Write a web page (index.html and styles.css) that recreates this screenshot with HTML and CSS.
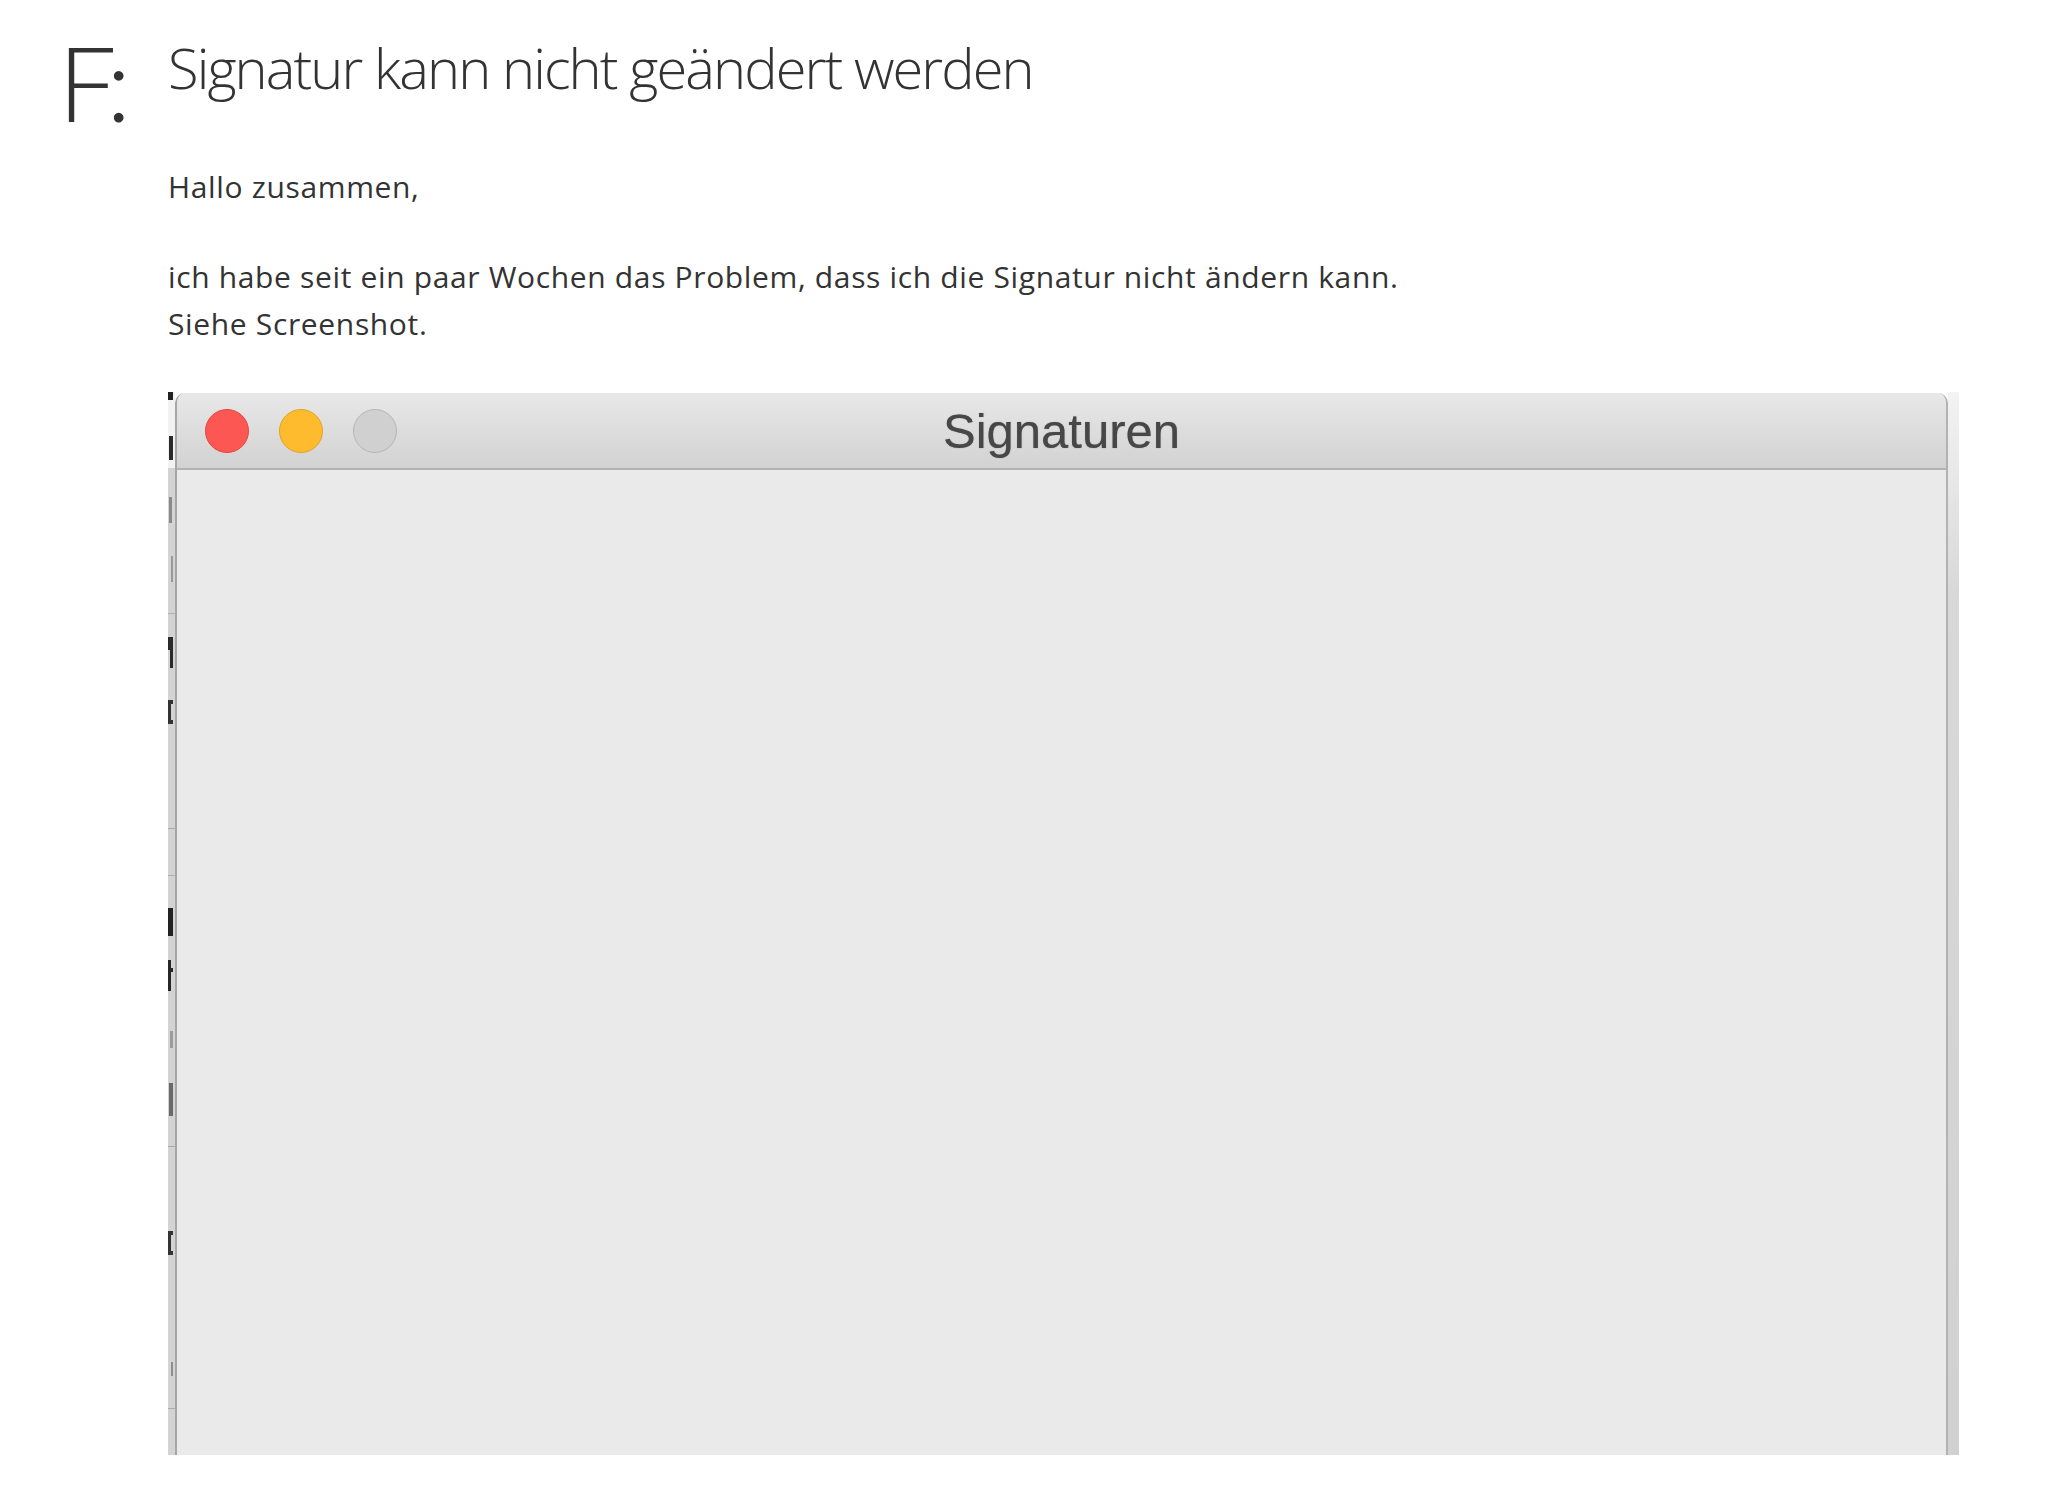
FILE: index.html
```html
<!DOCTYPE html>
<html lang="de">
<head>
    <meta charset="UTF-8">
    <meta name="viewport" content="width=device-width, initial-scale=1.0">
    <title>Signatur kann nicht geändert werden</title>
    <link rel="stylesheet" href="styles.css">
</head>
<body>
    <div class="question">
        <div class="label">F:</div>
        <div class="content">
            <h1 class="title">Signatur kann nicht geändert werden</h1>
            <p class="greeting">Hallo zusammen,</p>
            <p class="text">ich habe seit ein paar Wochen das Problem, dass ich die Signatur nicht ändern kann.<br>Siehe Screenshot.</p>

            <!-- Screenshot -->
            <div class="shot">
                <svg class="cutoff" width="7" height="1063" viewBox="0 0 7 1063">
                    <rect x="0" y="0" width="7" height="76" fill="#f2f2f2"/>
                    <rect x="0" y="76" width="7" height="987" fill="#d3d3d3"/>
                    <rect x="0" y="0" width="5" height="8" fill="#222"/>
                    <rect x="1" y="44" width="4" height="24" fill="#2a2a2a"/>
                    <rect x="1" y="105" width="3" height="26" fill="#8a8a8a"/>
                    <rect x="3" y="164" width="2" height="26" fill="#9a9a9a"/>
                    <rect x="0" y="221" width="7" height="1" fill="#b0b0b0"/>
                    <path d="M0 245h5v31h-3v-18h-2z" fill="#2b2b2b"/>
                    <path d="M0 308h5v4h-2v16h2v4h-5z" fill="#333"/>
                    <rect x="0" y="436" width="7" height="1" fill="#a8a8a8"/>
                    <rect x="0" y="483" width="7" height="1" fill="#b0b0b0"/>
                    <rect x="0" y="516" width="5" height="28" fill="#222"/>
                    <path d="M0 568h3v8h2v4h-2v19h-3z" fill="#262626"/>
                    <rect x="2" y="639" width="3" height="17" fill="#9c9c9c"/>
                    <rect x="1" y="691" width="4" height="33" fill="#6a6a6a"/>
                    <rect x="0" y="754" width="7" height="1" fill="#ababab"/>
                    <path d="M0 839h5v4h-2v16h2v4h-5z" fill="#333"/>
                    <rect x="3" y="970" width="2" height="14" fill="#8e8e8e"/>
                    <rect x="0" y="1016" width="7" height="1" fill="#acacac"/>
                </svg>
                <div class="window">
                    <div class="titlebar">
                        <div class="lights">
                            <span class="light close"></span>
                            <span class="light minimize"></span>
                            <span class="light zoom"></span>
                        </div>
                        <div class="window-title">Signaturen</div>
                    </div>
                    <div class="pane"></div>
                </div>
                <div class="shade"></div>
            </div>
        </div>
    </div>
</body>
</html>
```
FILE: styles.css
```css
body {
    margin: 0;
    background-color: #fff;
    font-family: "Open Sans", "Liberation Sans", sans-serif;
    color: #333;
}
.question {
    display: grid;
    grid-template-columns: 168px 1fr;
    padding-top: 30px;
}
.label {
    font-family: Lato, "Open Sans", sans-serif;
    font-weight: 300;
    font-size: 104px;
    line-height: 1;
    letter-spacing: -10px;
    padding-left: 58px;
    color: #333;
}
.title {
    margin: 4px 0 0;
    font-size: 56px;
    font-weight: 300;
    line-height: 1.2;
    letter-spacing: -1.9px;
    color: #333;
}
.greeting,
.text {
    font-size: 30px;
    line-height: 47px;
    letter-spacing: 0.65px;
    margin: 0;
}
.greeting {
    margin-top: 62px;
}
.text {
    margin-top: 43px;
}
.shot {
    display: flex;
    width: 1791px;
    height: 1063px;
    margin-top: 45px;
}
.cutoff {
    flex: none;
    display: block;
}
.window {
    flex: 1;
    display: flex;
    flex-direction: column;
    margin-top: 1px;
    border-left: 2px solid #a6a6a6;
    border-right: 2px solid #b2b2b2;
    border-radius: 10px 10px 0 0;
    overflow: hidden;
    background: #eaeaea;
}
.titlebar {
    display: grid;
    grid-template-columns: 1fr auto 1fr;
    align-items: center;
    height: 75px;
    background: linear-gradient(#e8e8e8, #d2d2d2);
    border-bottom: 2px solid #b3b3b3;
}
.lights {
    display: flex;
    gap: 30px;
    padding-left: 28px;
}
.light {
    width: 42px;
    height: 42px;
    border-radius: 50%;
    border: 1px solid;
}
.close {
    background: #fd5753;
    border-color: #e2463f;
}
.minimize {
    background: #febb2e;
    border-color: #e0a326;
}
.zoom {
    background: #d0d0d0;
    border-color: #b6b6b6;
}
.window-title {
    font-family: "Liberation Sans", Arial, sans-serif;
    font-size: 49px;
    color: #474747;
    text-shadow: 0 0 1px rgba(0, 0, 0, 0.45);
}
.pane {
    flex: 1;
    background: #eaeaea;
}
.shade {
    flex: none;
    width: 11px;
    background: linear-gradient(#f3f3f3, #d8d8d8 200px, #d1d1d1);
}
```
